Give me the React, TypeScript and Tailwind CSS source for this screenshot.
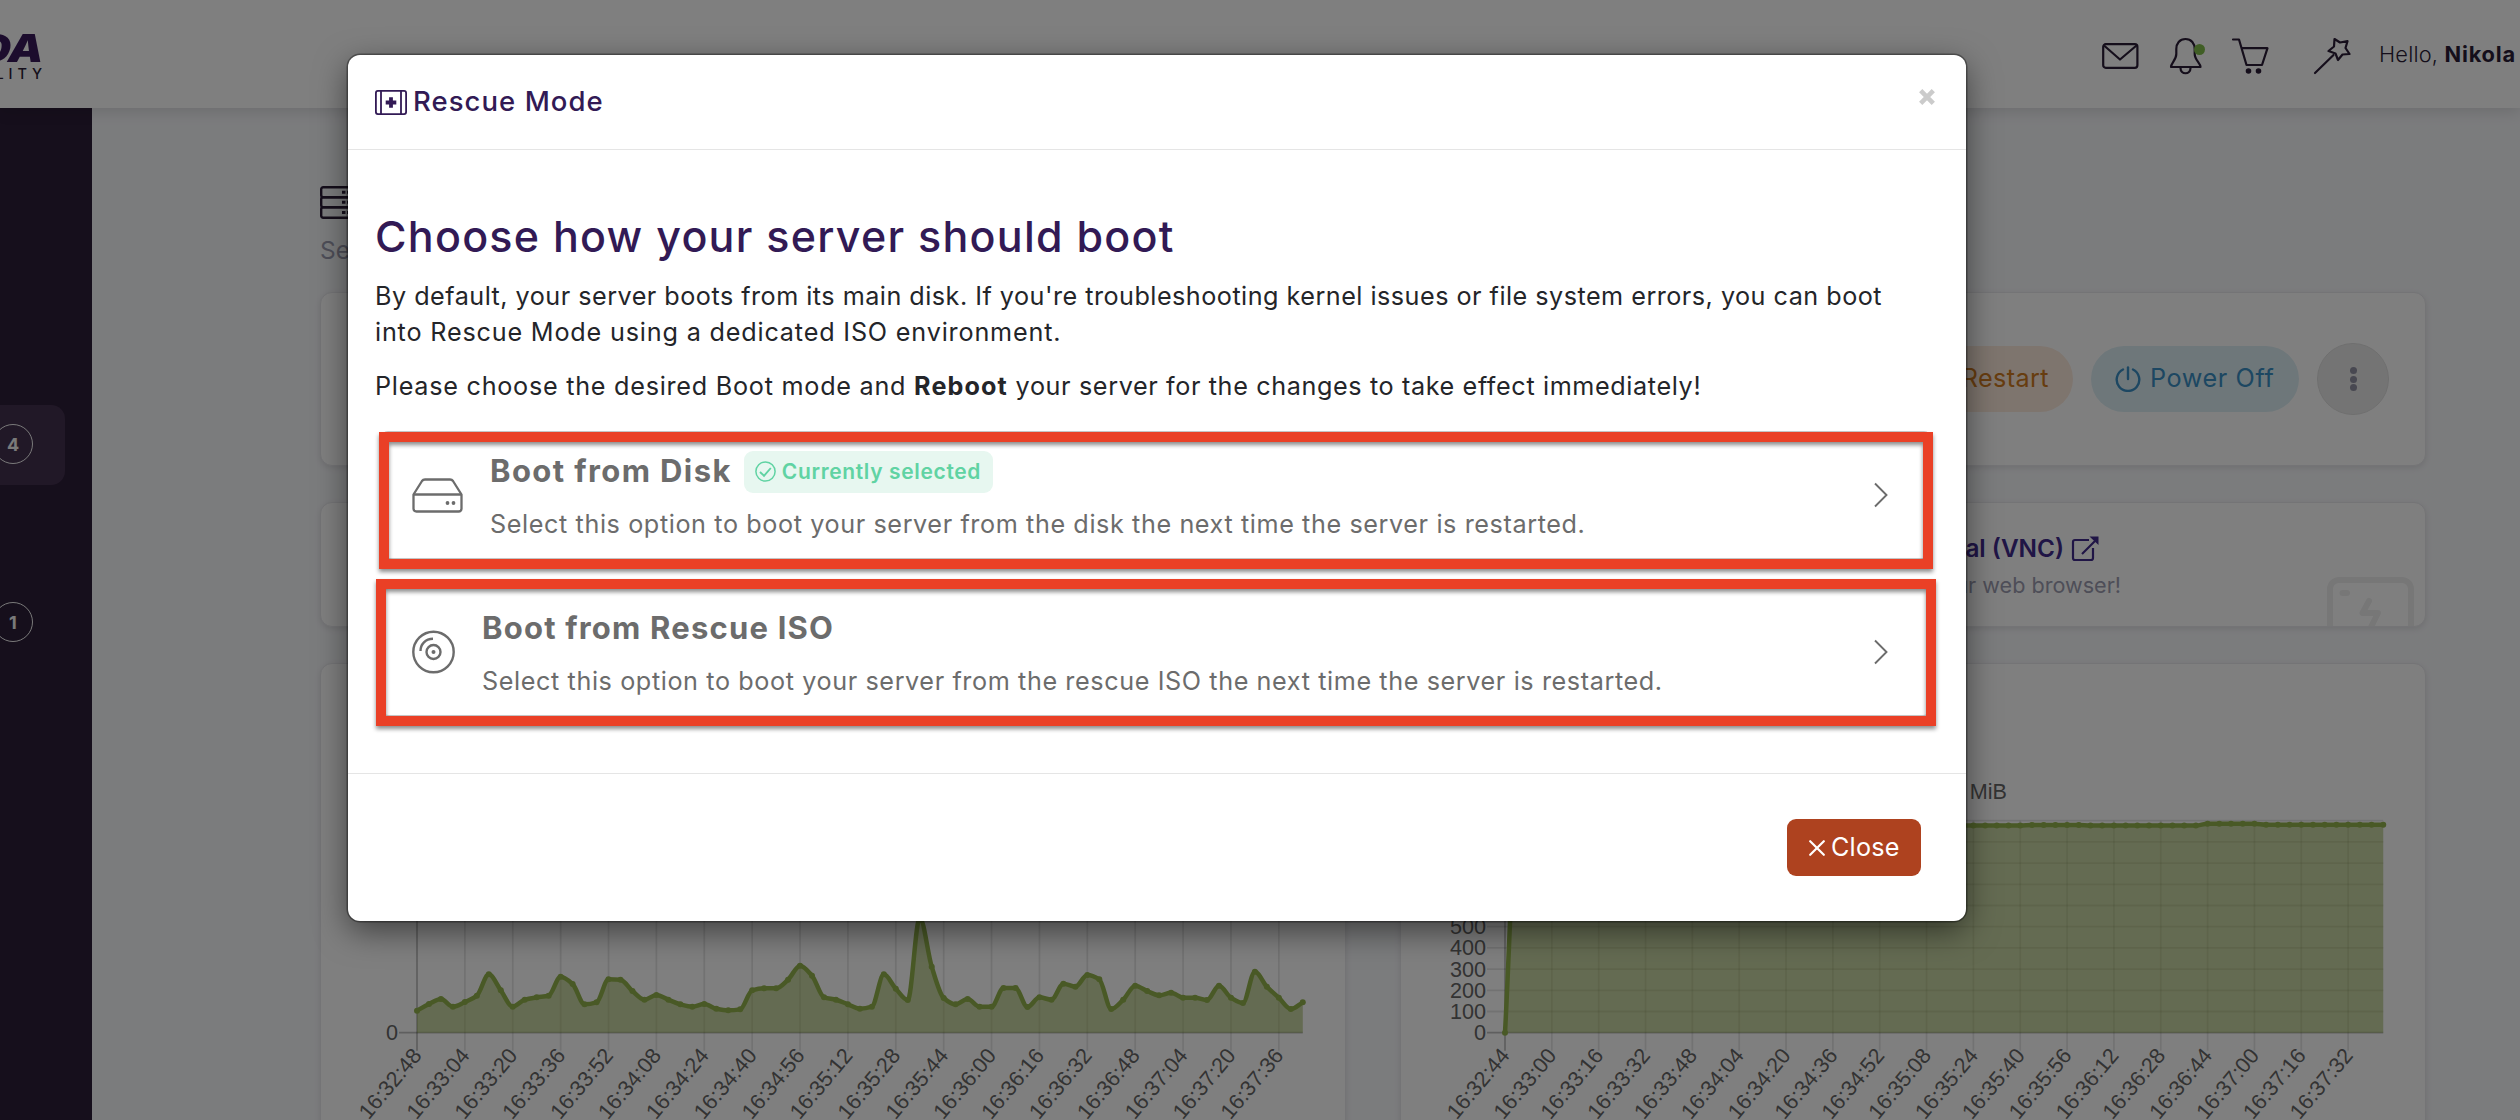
import type { ReactNode } from 'react';

const CPU_POINTS = [
  66, 86, 101, 78, 92, 111, 175, 127, 78, 99, 106, 111, 168, 146, 85, 91, 160, 159, 125, 99,
  113, 99, 85, 78, 86, 72, 67, 70, 127, 133, 133, 159, 201, 171, 106, 99, 85, 72, 78, 175,
  132, 98, 345, 198, 104, 85, 101, 78, 78, 134, 134, 77, 106, 99, 147, 138, 173, 160, 71, 99,
  141, 125, 112, 120, 105, 105, 98, 141, 105, 89, 183, 138, 105, 71, 91,
].map((v) => v / 3);

const MEMORY_POINTS = Array.from({ length: 76 }, (_, i) => {
  if (i === 0) return 0;
  if (i >= 60 && i < 65) return 209;
  if (i >= 65) return 208;
  return i > 44 && i < 50 ? 207.6 : 207.2;
});

function timeLabels(start: number, count: number) {
  const pad = (n: number) => String(n).padStart(2, '0');
  return Array.from({ length: count }, (_, i) => {
    const t = start + i * 16;
    return `16:${pad(Math.floor(t / 60))}:${pad(t % 60)}`;
  });
}

// Monotone cubic path, so the line never overshoots its points
function smoothPath(xs: number[], ys: number[]) {
  const n = xs.length;
  const d = xs.slice(1).map((x, i) => (ys[i + 1] - ys[i]) / (x - xs[i]));
  const m = xs.map((_, i) => {
    if (i === 0) return d[0];
    if (i === n - 1) return d[n - 2];
    if (d[i - 1] * d[i] <= 0) return 0;
    return (2 * d[i - 1] * d[i]) / (d[i - 1] + d[i]);
  });
  let path = `M${xs[0]},${ys[0]}`;
  for (let i = 0; i < n - 1; i++) {
    const h = (xs[i + 1] - xs[i]) / 3;
    path += `C${xs[i] + h},${ys[i] + m[i] * h} ${xs[i + 1] - h},${ys[i + 1] - m[i + 1] * h} ${xs[i + 1]},${ys[i + 1]}`;
  }
  return path;
}

interface UsageChartProps {
  points: number[];
  left: number;
  step: number;
  start: number;
  yTicks: number[];
  yStep: number;
  legend?: string;
}

function UsageChart({ points, left, step, start, yTicks, yStep, legend }: UsageChartProps) {
  const base = 369.7;
  const xs = points.map((_, i) => left + i * step);
  const ys = points.map((v) => base - v);
  const right = xs[xs.length - 1];
  const line = smoothPath(xs, ys);
  const top = base - yStep * (yTicks.length - 1);

  return (
    <svg width="1026" height="457" viewBox="0 0 1026 457" className="block font-['Liberation_Sans',sans-serif] text-[21.6px]">
      {yTicks.map((tick, i) => (
        <g key={tick}>
          <path
            d={`M${left - 18},${base - i * yStep}H${right}`}
            stroke="#000"
            strokeOpacity={i === 0 ? 0.25 : 0.1}
            strokeWidth="1.8"
          />
          <text x={left - 19} y={base - i * yStep + 7.5} textAnchor="end" fill="#666">
            {tick}
          </text>
        </g>
      ))}
      {timeLabels(start, 19).map((label, i) => (
        <g key={label}>
          <path
            d={`M${left + i * step * 4},${top}V${base + 18}`}
            stroke="#000"
            strokeOpacity={i === 0 ? 0.25 : 0.1}
            strokeWidth="1.8"
          />
          <text
            transform={`translate(${left + i * step * 4},${base + 18.5}) rotate(-50)`}
            dy="7.5"
            textAnchor="end"
            fill="#666"
          >
            {label}
          </text>
        </g>
      ))}
      <path d={`${line}V${base}H${left}Z`} fill="#93ad4a" fillOpacity="0.5" />
      <path d={line} fill="none" stroke="#93b34c" strokeWidth="4.5" strokeLinejoin="round" />
      {xs.map((x, i) => (
        <circle key={i} cx={x} cy={ys[i]} r="3" fill="#93b34c" />
      ))}
      {legend && (
        <text x="607" y="136" textAnchor="end" fill="#666">
          {legend}
        </text>
      )}
    </svg>
  );
}

function Card({ className, children }: { className: string; children?: ReactNode }) {
  return (
    <div
      className={`relative overflow-hidden rounded-xl border border-[#e8e8ec] bg-white shadow-[0_2px_6px_rgba(0,0,0,0.1)] ${className}`}
    >
      {children}
    </div>
  );
}

function Header() {
  return (
    <header className="relative z-10 flex h-[108px] w-full items-start bg-white shadow-[0_4px_14px_rgba(0,0,0,0.12)]">
      <div className="flex w-[42px] flex-col items-end pt-[28px] text-[#38195b]">
        <div className="h-[39px] origin-right scale-x-115 text-[39px] leading-[39px] font-black italic tracking-[-1px]">
          DA
        </div>
        <div className="-mr-[5px] text-[14.5px] leading-[13px] font-medium tracking-[4.9px] text-[#2b1d37]">LITY</div>
      </div>

      <nav className="ml-[2059px] flex h-[108px] items-center pt-[3px] text-[#2b1d37]">
        <svg width="38" height="28" viewBox="0 0 38 28" fill="none" stroke="currentColor" strokeWidth="2.2" strokeLinejoin="round">
          <rect x="2.2" y="2.2" width="34.2" height="23.6" rx="2.5" />
          <path d="M3 3.5L19 17.5L35.5 3.5" />
        </svg>
        <div className="relative ml-[30px]">
          <svg width="34" height="38" viewBox="0 0 34 38" fill="none" stroke="currentColor" strokeWidth="2.2" strokeLinejoin="round">
            <path d="M16.5 2C10.5 2 7.3 6.5 7.3 12V17C7.3 23 2 26 2 30H31.5C31.5 26 25.7 23 25.7 17V12C25.7 6.5 22.5 2 16.5 2Z" />
            <path d="M11.5 31C11.5 38 21.5 38 21.5 31" />
          </svg>
          <span className="absolute top-[7px] left-[25px] size-[11px] rounded-full bg-[#80bd4a]" />
        </div>
        <svg className="ml-[28px]" width="38" height="38" viewBox="0 0 38 38" fill="none" stroke="currentColor" strokeWidth="2.2" strokeLinejoin="round" strokeLinecap="round">
          <path d="M2 2.5H8L15.5 28H31L36.5 11.2H11" />
          <circle cx="17.5" cy="34" r="2" fill="currentColor" strokeWidth="1.6" />
          <circle cx="27.5" cy="34" r="2" fill="currentColor" strokeWidth="1.6" />
        </svg>
        <svg className="ml-[44px]" width="38" height="38" viewBox="0 0 38 38" fill="none" stroke="currentColor" strokeWidth="2.2" strokeLinejoin="round" strokeLinecap="round">
          <path d="M2 36L20.5 18" />
          <path d="M21.5 2L27 5.5L34.5 4.2L32.5 11L36.5 17L29.5 17.5L25 23L22.5 16.5L15.5 14L21 9.5Z" />
        </svg>
        <div className="-mt-[2px] ml-[28px] text-[21.8px] whitespace-nowrap">
          <span className="font-light tracking-[0.2px]">Hello, </span>
          <span className="font-bold tracking-[0.8px]">Nikola</span>
        </div>
      </nav>
    </header>
  );
}

function Count({ value }: { value: number }) {
  return (
    <span className="-mt-[2px] -ml-[7px] flex size-[40px] items-center justify-center rounded-full border border-[#f4f4f4] text-[18px] font-bold">
      {value}
    </span>
  );
}

function Sidebar() {
  return (
    <aside className="relative h-full w-[92px] overflow-hidden bg-[#2c1e38] pt-[297px] text-[#f4f4f4]">
      <div className="flex h-[80px] w-[65px] items-center rounded-r-[14px] bg-[#43304f]">
        <Count value={4} />
      </div>
      <div className="mt-[98px] flex h-[80px] w-[65px] items-center">
        <Count value={1} />
      </div>
    </aside>
  );
}

function Dashboard() {
  return (
    <main className="flex-1 bg-[#f7f8fb] pl-[228px]">
      <div className="flex h-[184px] w-[2106px] flex-col pt-[78px]">
        <svg width="46" height="33" viewBox="0 0 46 33" fill="none" stroke="#2b1d37" strokeWidth="2.4">
          <rect x="1.2" y="1.2" width="43" height="10" rx="2" />
          <rect x="1.2" y="11.2" width="43" height="10" rx="2" />
          <rect x="1.2" y="21.2" width="43" height="10.5" rx="2" />
          <path d="M22 6.3H25.5M27 6.3H30M22 16.3H25.5M27 16.3H30M22 26.4H25.5M27 26.4H30" strokeWidth="3" />
        </svg>
        <div className="mt-[13px] text-[24.5px] leading-[36px] text-[#9c9cb0]">Server</div>
      </div>

      <Card className="flex h-[174px] w-[2106px] items-center justify-end gap-[18px] pr-[36px]">
        <div className="flex h-[66px] w-[200px] items-center justify-end rounded-full bg-[#fdeadd] pr-[24px] text-[25.2px] tracking-[0.4px] text-[#cf7a20]">
          Restart
        </div>
        <div className="flex h-[66px] w-[208px] items-center rounded-full bg-[#ddeff5] pl-[24px] text-[25.2px] text-[#3a8fc4]">
          <svg width="26" height="26" viewBox="0 0 26 26" fill="none" stroke="currentColor" strokeWidth="2.4" strokeLinecap="round">
            <path d="M13 1.5V13" />
            <path d="M8 3.5A11.3 11.3 0 1 0 18 3.5" />
          </svg>
          <span className="ml-[9px] tracking-[0.6px] whitespace-nowrap">Power Off</span>
        </div>
        <div className="flex size-[72px] flex-col items-center justify-center gap-[1.7px] rounded-full border border-[#dedede] bg-[#e9e9e9]">
          <span className="size-[7px] rounded-full bg-[#9090a2]" />
          <span className="size-[7px] rounded-full bg-[#9090a2]" />
          <span className="size-[7px] rounded-full bg-[#9090a2]" />
        </div>
      </Card>

      <Card className="mt-[36px] flex h-[125px] w-[2106px] flex-col items-end pt-[27px] pr-[304px]">
        <div className="mr-[21px] flex h-[36px] items-center text-[24.3px] font-semibold whitespace-nowrap text-[#402a8c]">
          Terminal (VNC)
          <svg className="ml-[7px]" width="29" height="27" viewBox="0 0 29 27" fill="none" stroke="currentColor" strokeWidth="2.2">
            <path d="M18 5H4Q2 5 2 7V23Q2 25 4 25H20Q22 25 22 23V13" />
            <path d="M11 19L24 6" />
            <path d="M18.5 1.5H27.5V10Z" fill="currentColor" stroke="none" />
          </svg>
        </div>
        <div className="mt-[4px] text-[21.6px] leading-[30px] whitespace-nowrap text-[#9c9cb0]">
          from your web browser!
        </div>
        <svg className="absolute top-[74px] right-[11px]" width="87" height="70" viewBox="0 0 87 70" fill="none" stroke="#efefef" strokeWidth="6" strokeLinecap="round" strokeLinejoin="round">
          <rect x="3" y="3" width="81" height="66" rx="9" />
          <path d="M15.5 16H20" />
          <path d="M42 24L35.5 36H51L44 50" />
        </svg>
      </Card>

      <div className="mt-[36px] flex gap-[54px]">
        <Card className="h-[480px] w-[1026px]">
          <div className="-m-px">
            <UsageChart points={CPU_POINTS} left={97} step={11.97} start={32 * 60 + 48} yTicks={[0, 20]} yStep={212} />
          </div>
        </Card>
        <Card className="h-[480px] w-[1026px]">
          <div className="-m-px">
            <UsageChart
              points={MEMORY_POINTS}
              left={105}
              step={11.71}
              start={32 * 60 + 44}
              yTicks={[0, 100, 200, 300, 400, 500, 600, 700, 800, 900, 1000]}
              yStep={21.2}
              legend="MiB"
            />
          </div>
        </Card>
      </div>
    </main>
  );
}

interface BootOptionProps {
  icon: ReactNode;
  title: ReactNode;
  badge?: ReactNode;
  description: string;
}

function BootOption({ icon, title, badge, description }: BootOptionProps) {
  return (
    <div className="mr-[7px] ml-[5px] flex h-[128px] items-center rounded-lg border border-[#c9c9c9] pr-[42px] pl-[31px] text-[#6c6c6c]">
      {icon}
      <div className="ml-[27px] flex-1 pt-[2px] whitespace-nowrap">
        <div className="flex h-[42px] items-center">
          <h4 className="text-[31px] font-bold">{title}</h4>
          {badge}
        </div>
        <p className="mt-[13px] text-[25.2px] leading-[36px] tracking-[0.6px]">{description}</p>
      </div>
      <svg width="16" height="26" viewBox="0 0 16 26" fill="none" stroke="currentColor" strokeWidth="1.9">
        <path d="M2 1.5L13.5 13L2 24.5" />
      </svg>
    </div>
  );
}

function RescueModal() {
  return (
    <div className="flex h-[866px] w-[1618px] flex-col rounded-xl bg-white text-[#242529] shadow-[0_0_0_1.5px_rgba(0,0,0,0.35),0_10px_32px_rgba(0,0,0,0.5)]">
      <div className="flex h-[95px] items-center border-b border-[#e5e5e5] pr-[31px] pl-[27px] text-[#321a55]">
        <svg width="32" height="25" viewBox="0 0 32 25" fill="none" stroke="currentColor" strokeWidth="1.8">
          <rect x="0.9" y="0.9" width="30.2" height="23.2" rx="2" />
          <path d="M6 1V24M26 1V24" />
          <path d="M16 7.2V17.8M10.7 12.5H21.3" strokeWidth="3.8" />
        </svg>
        <h3 className="ml-[6px] flex-1 text-[27.5px] font-medium tracking-[1.05px]">Rescue Mode</h3>
        <svg className="-mt-[10px]" width="16" height="16" viewBox="0 0 16 16" stroke="#cbcbcb" strokeWidth="4.6">
          <path d="M1.7 1.7L14.3 14.3M14.3 1.7L1.7 14.3" />
        </svg>
      </div>

      <div className="flex-1 px-[27px] pt-[62px]">
        <h2 className="text-[43px] leading-[48px] font-medium tracking-[1.25px] whitespace-nowrap text-[#321a55]">
          Choose how your server should boot
        </h2>
        <p className="mt-[18px] text-[25.2px] leading-[36px] whitespace-nowrap">
          <span className="tracking-[0.48px]">
            By default, your server boots from its main disk. If you're troubleshooting kernel issues or file system errors, you can boot
          </span>
          <br />
          <span className="tracking-[0.82px]">into Rescue Mode using a dedicated ISO environment.</span>
        </p>
        <p className="mt-[18px] text-[25.2px] leading-[36px] tracking-[0.62px] whitespace-nowrap">
          <span className="tracking-[0.74px]">Please choose the desired Boot mode and </span>
          <b className="tracking-[1.1px]">Reboot</b> your server for the changes to take effect immediately!
        </p>

        <div className="relative mt-[27px] flex flex-col gap-[29px]">
          <BootOption
            icon={
              <svg width="51" height="35" viewBox="0 0 51 35" fill="none" stroke="currentColor" strokeWidth="2.3" strokeLinejoin="round">
                <path d="M1.5 16.5L10 3Q11 1.5 13 1.5H38Q40 1.5 41 3L49.5 16.5V30.5Q49.5 33.5 46.5 33.5H4.5Q1.5 33.5 1.5 30.5Z" />
                <path d="M1.5 16.5H49.5" />
                <circle cx="35.5" cy="25" r="1.9" fill="currentColor" stroke="none" />
                <circle cx="41.5" cy="25" r="1.9" fill="currentColor" stroke="none" />
              </svg>
            }
            title={<span className="tracking-[1.4px]">Boot from Disk</span>}
            badge={
              <span className="ml-[12px] flex h-[42px] w-[249px] items-center rounded-[9px] bg-[#e7f7f0] pl-[11px] text-[21px] font-semibold text-[#60d3a3]">
                <svg width="21" height="21" viewBox="0 0 21 21" fill="none" stroke="currentColor" strokeWidth="1.5">
                  <circle cx="10.5" cy="10.5" r="9.6" />
                  <path d="M5 11L9 14.8L15.8 7" strokeWidth="1.9" />
                </svg>
                <span className="ml-[6px] tracking-[0.65px]">Currently selected</span>
              </span>
            }
            description="Select this option to boot your server from the disk the next time the server is restarted."
          />
          <BootOption
            icon={
              <svg width="43" height="44" viewBox="0 0 43 44" fill="none" stroke="currentColor" strokeWidth="2.4">
                <circle cx="21.5" cy="22" r="20.2" />
                <circle cx="21.5" cy="22" r="7" />
                <circle cx="21.5" cy="22" r="2" fill="currentColor" stroke="none" />
                <path d="M8.5 21C8.5 14 13.5 8.8 21 8.8" />
              </svg>
            }
            title={<span className="tracking-[1.2px]">Boot from Rescue ISO</span>}
            description="Select this option to boot your server from the rescue ISO the next time the server is restarted."
          />

          {/* Highlight frames drawn over the options */}
          <div className="absolute top-[1px] left-[4px] h-[137px] w-[1554px] border-10 border-[#ea4026] drop-shadow-[0_3px_2px_rgba(0,0,0,0.45)]" />
          <div className="absolute top-[148px] left-[1px] h-[147px] w-[1560px] border-10 border-[#ea4026] drop-shadow-[0_3px_2px_rgba(0,0,0,0.45)]" />
        </div>
      </div>

      <div className="flex h-[148px] items-center justify-end border-t border-[#e5e5e5] pr-[45px]">
        <button className="flex h-[57px] w-[134px] items-center rounded-[9px] bg-[#ae421f] pl-[22px] text-[25.2px] text-white">
          <svg width="16" height="16" viewBox="0 0 16 16" stroke="currentColor" strokeWidth="2.2" strokeLinecap="round">
            <path d="M1.2 1.2L14.8 14.8M14.8 1.2L1.2 14.8" />
          </svg>
          <span className="ml-[6px] tracking-[0.2px]">Close</span>
        </button>
      </div>
    </div>
  );
}

export default function App() {
  return (
    <div className="relative flex h-[1120px] w-[2520px] flex-col overflow-hidden font-['Inter',sans-serif]">
      <Header />
      <div className="flex h-[1012px]">
        <Sidebar />
        <Dashboard />
      </div>
      <div className="absolute inset-0 z-20 bg-black/50 pt-[55px] pl-[348px]">
        <RescueModal />
      </div>
    </div>
  );
}
